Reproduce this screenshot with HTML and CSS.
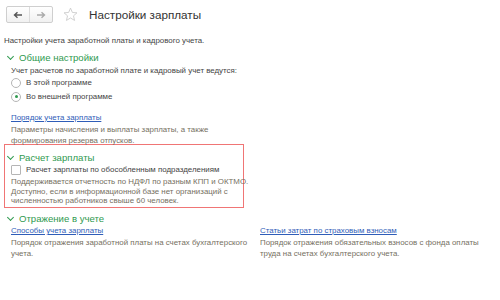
FILE: index.html
```html
<!DOCTYPE html>
<html lang="ru">
<head>
<meta charset="utf-8">
<link rel="stylesheet" href="styles.css">
</head>
<body>
<div class="toolbar">
  <div class="nav">
    <span class="navbtn"><svg width="10" height="8" viewBox="0 0 10 8"><path d="M9 4H2M4.5 1.2L1.5 4l3 2.8" fill="none" stroke="#555" stroke-width="1.4"/></svg></span>
    <span class="navbtn"><svg width="10" height="8" viewBox="0 0 10 8"><path d="M1 4h7M5.5 1.2L8.5 4l-3 2.8" fill="none" stroke="#aaa" stroke-width="1.4"/></svg></span>
  </div>
  <svg class="star" width="15" height="15" viewBox="0 0 16 16"><path d="M8 1.2l2 4.6 4.9.4-3.7 3.2 1.1 4.9L8 11.7l-4.3 2.6 1.1-4.9L1.1 6.2 6 5.8z" fill="none" stroke="#c8c8c8" stroke-width="0.9" stroke-linejoin="round"/></svg>
  <h1 class="title">Настройки зарплаты</h1>
</div>
<p class="subtitle">Настройки учета заработной платы и кадрового учета.</p>

<section class="group">
  <h2 class="ghead"><span class="chev"></span>Общие настройки</h2>
  <div class="gbody">
    <p class="label">Учет расчетов по заработной плате и кадровый учет ведутся:</p>
    <label class="radio"><span class="rb"></span>В этой программе</label>
    <label class="radio r2"><span class="rb on"></span>Во внешней программе</label>
    <a class="link l1">Порядок учета зарплаты</a>
    <p class="desc">Параметры начисления и выплаты зарплаты, а также<br>формирования резерва отпусков.</p>
  </div>
</section>

<section class="group boxed">
  <h2 class="ghead"><span class="chev"></span>Расчет зарплаты</h2>
  <div class="gbody">
    <label class="check"><span class="cb"></span>Расчет зарплаты по обособленным подразделениям</label>
    <p class="desc">Поддерживается отчетность по НДФЛ по разным КПП и ОКТМО.<br>Доступно, если в информационной базе нет организаций с<br>численностью работников свыше 60 человек.</p>
  </div>
</section>

<section class="group g3">
  <h2 class="ghead"><span class="chev"></span>Отражение в учете</h2>
  <div class="cols">
    <div class="col">
      <a class="link">Способы учета зарплаты</a>
      <p class="desc">Порядок отражения заработной платы на счетах бухгалтерского<br>учета.</p>
    </div>
    <div class="col">
      <a class="link">Статьи затрат по страховым взносам</a>
      <p class="desc">Порядок отражения обязательных взносов с фонда оплаты<br>труда на счетах бухгалтерского учета.</p>
    </div>
  </div>
</section>
</body>
</html>
```

FILE: styles.css
```css
html, body { margin: 0; padding: 0; background: #fff; }
body {
  font-family: "Liberation Sans", Arial, sans-serif;
  font-size: 7.9px;
  color: #444;
  width: 500px;
  height: 300px;
  overflow: hidden;
}
p, h1, h2 { margin: 0; font-weight: normal; }

.toolbar {
  display: flex;
  align-items: center;
  padding: 6px 6px 0 6px;
  height: 17px;
}
.nav {
  display: flex;
  border: 1px solid #cfcfcf;
  border-radius: 2px;
  background: linear-gradient(#ffffff, #f1f1f1);
  height: 15px;
}
.navbtn {
  width: 22px;
  display: flex;
  align-items: center;
  justify-content: center;
}
.navbtn + .navbtn { border-left: 1px solid #dcdcdc; }
.star { margin-left: 10px; }
.title {
  margin-left: 11px;
  font-size: 11.7px;
  color: #333;
}

.subtitle {
  margin: 12px 0 0 4px;
  line-height: 11px;
  color: #444;
  white-space: nowrap;
}

.group { margin-left: 4px; }
.ghead {
  display: flex;
  align-items: center;
  font-size: 9.6px;
  color: #2f9a4f;
  line-height: 13px;
  margin-top: 5px;
}
.chev {
  width: 4px; height: 4px;
  border-right: 1.2px solid #2f9a4f;
  border-bottom: 1.2px solid #2f9a4f;
  transform: rotate(45deg);
  margin: 0 6px 3px 4px;
}
.gbody { padding-left: 7px; }
.label { line-height: 11px; margin-top: 1px; white-space: nowrap; }
.radio, .check {
  display: flex;
  align-items: center;
  line-height: 11px;
  color: #444;
  white-space: nowrap;
}
.radio { margin-top: 1px; }
.radio.r2 { margin-top: 3px; }
.rb {
  width: 8px; height: 8px;
  border: 1px solid #b5b5b5;
  border-radius: 50%;
  margin-right: 5px;
  display: flex; align-items: center; justify-content: center;
  background: #fff;
}
.rb.on::after {
  content: "";
  width: 3px; height: 3px; border-radius: 50%;
  background: #2f9a4f;
}
.cb {
  width: 8px; height: 8px;
  border: 1px solid #b5b5b5;
  border-radius: 1px;
  margin-right: 5px;
  background: #fff;
}
.link {
  display: block;
  color: #2f5db8;
  text-decoration: underline;
  line-height: 11px;
  white-space: nowrap;
}
.l1 { margin-top: 10px; }
.desc {
  color: #76705f;
  line-height: 11px;
  margin-top: 1px;
  white-space: nowrap;
}

.boxed {
  margin: -2px 256px 0 4px;
  border: 1.5px solid #f07575;
  height: 64px;
  box-sizing: border-box;
}
.boxed .ghead { margin-top: 6px; margin-left: -1px; }
.boxed .gbody { padding-left: 6px; }
.boxed .check { margin-top: 0; }
.boxed .desc { margin-top: 2px; line-height: 9.5px; }

.g3 .ghead { margin-top: 4px; }
.cols {
  display: grid;
  grid-template-columns: 249px 1fr;
  padding-left: 7px;
}
```
